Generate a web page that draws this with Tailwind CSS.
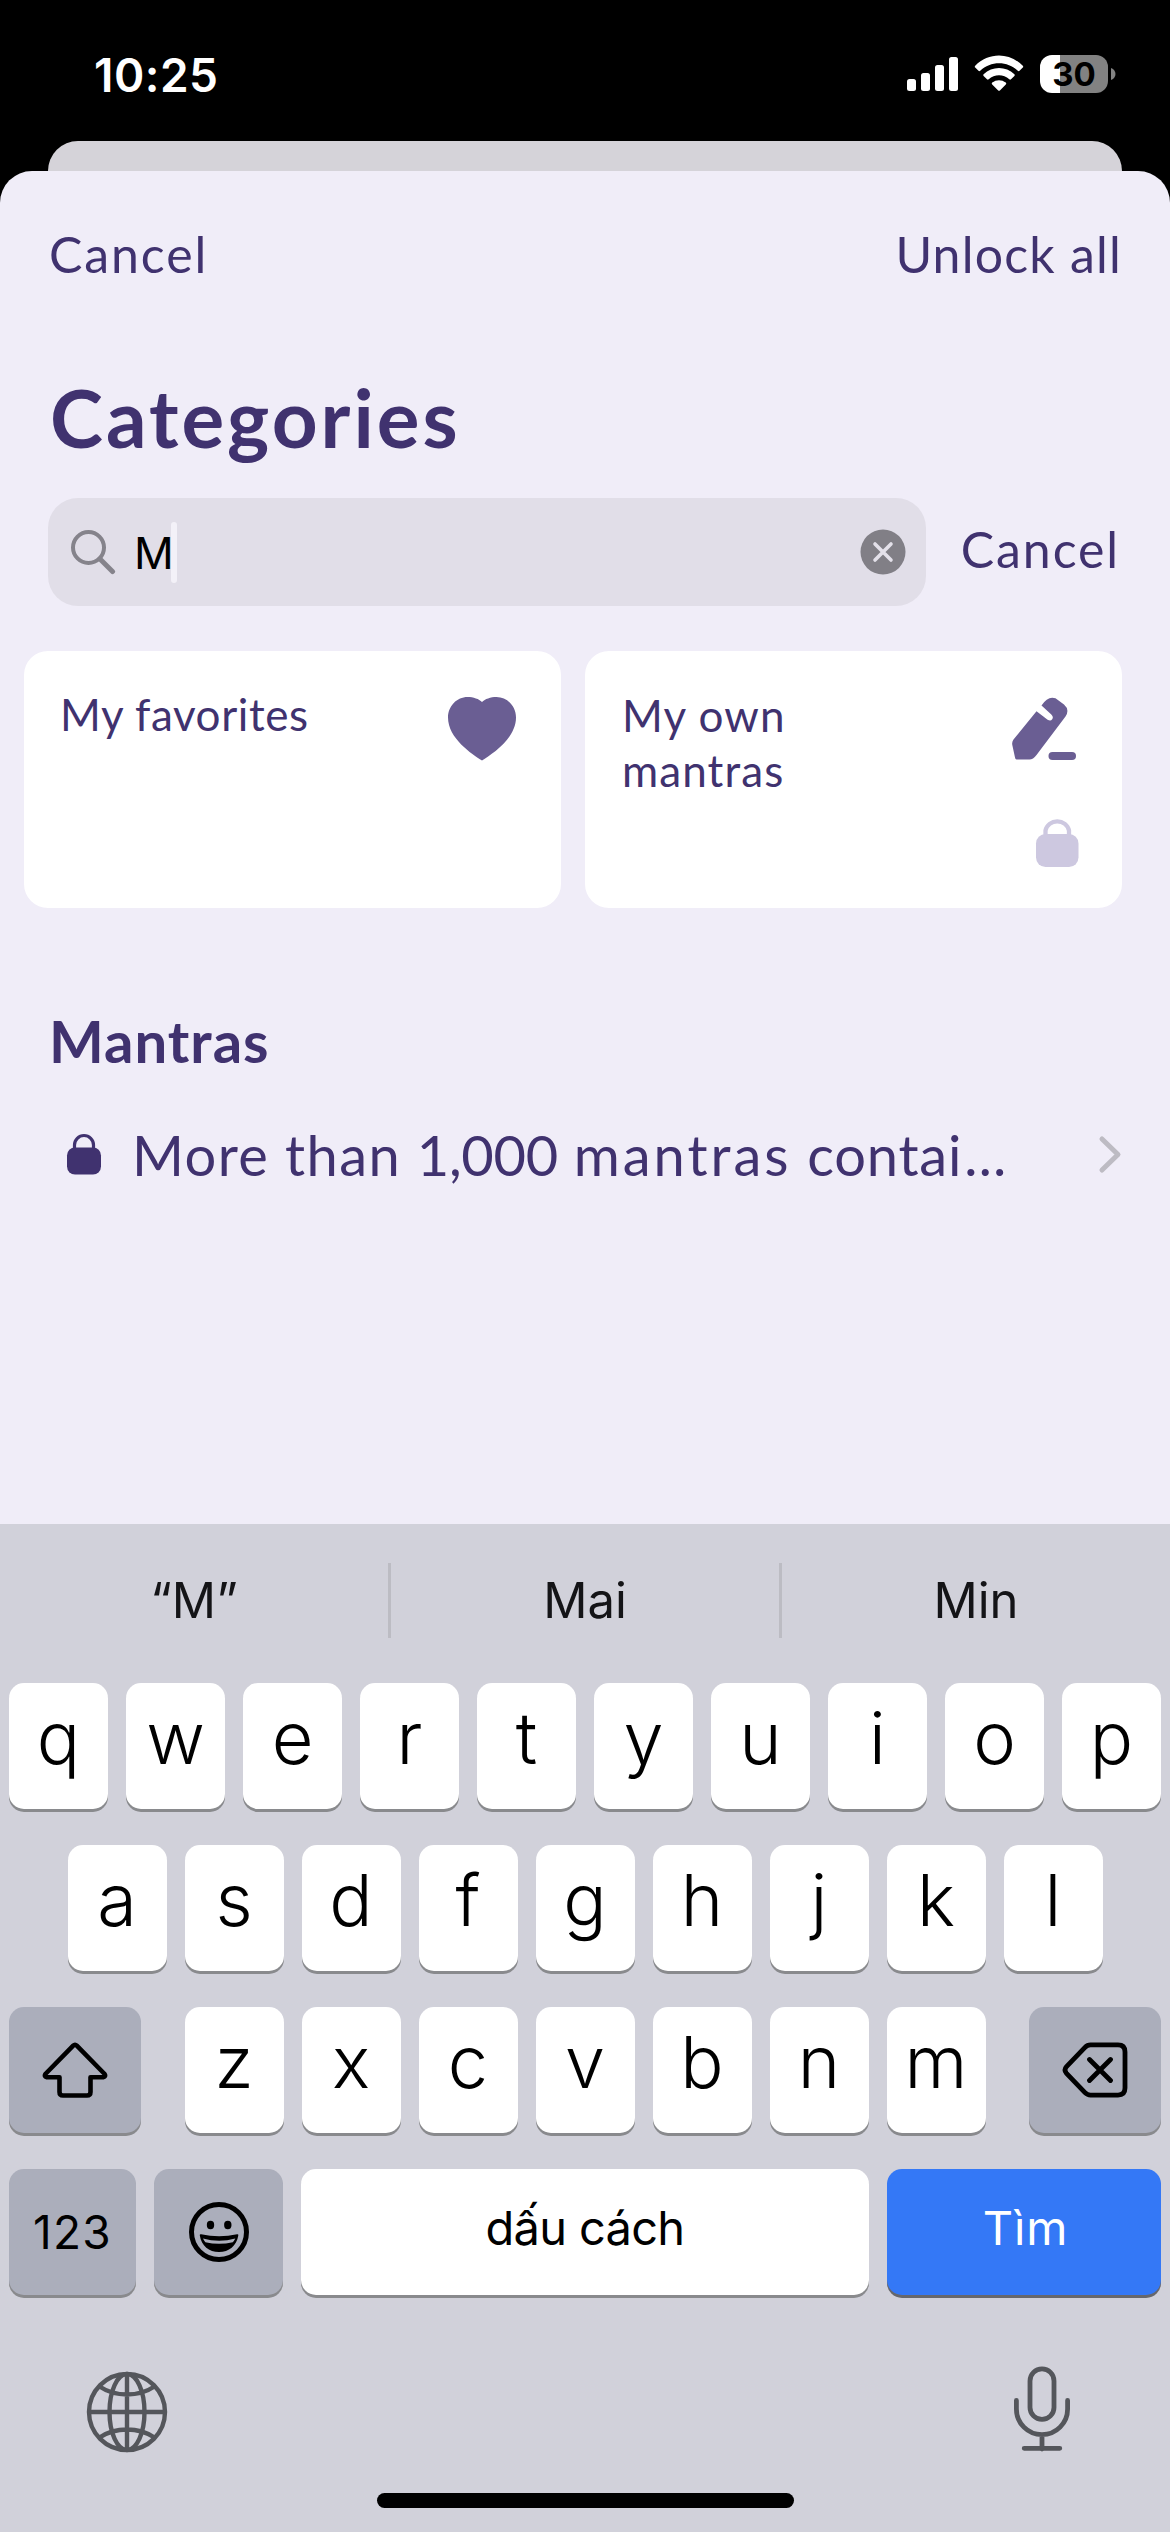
<!DOCTYPE html>
<html lang="vi">
<head>
<meta charset="utf-8">
<title>Categories</title>
<script src="https://cdn.jsdelivr.net/npm/@tailwindcss/browser@4"></script>
</head>
<body class="bg-black">
<div class="flex h-[2532px] w-[1170px] flex-col overflow-hidden bg-black font-['Lato',sans-serif] text-[#40326f]">

  <!-- Status bar -->
  <header class="flex h-[141px] shrink-0 items-start justify-between pl-[94px] pr-[54px] font-['Inter',sans-serif] text-white">
    <div class="pt-[47px] text-[46px] leading-[56px] font-semibold tracking-[0.5px]">10:25</div>
    <div class="flex items-center pt-[55px]">
      <svg class="h-[38px] w-[52px]" viewBox="0 0 52 38" fill="currentColor">
        <rect x="0" y="24" width="9" height="12" rx="2.5"/><rect x="14" y="18" width="9" height="18" rx="2.5"/><rect x="28" y="10" width="9" height="26" rx="2.5"/><rect x="42" y="2" width="9" height="34" rx="2.5"/>
      </svg>
      <svg class="ml-[15px] h-[38px] w-[50px]" viewBox="0 0 50 38" fill="currentColor">
        <path d="M1.2 10.8C14.5-2.9 35.5-2.9 48.8 10.800a1.200 1.200 0 0 1 0 1.700l-3.300 3.300a1.200 1.200 0 0 1-1.700 0C33.500 5.600 16.500 5.600 6.200 15.800a1.200 1.200 0 0 1-1.700 0l-3.300-3.300a1.200 1.200 0 0 1 0-1.700z"/>
        <path d="M9.600 19.200C18.200 10.900 31.800 10.900 40.400 19.200a1.200 1.200 0 0 1 0 1.700l-3.400 3.400a1.200 1.200 0 0 1-1.700 0C29.600 18.900 20.400 18.900 14.700 24.300a1.200 1.200 0 0 1-1.700 0l-3.400-3.400a1.200 1.200 0 0 1 0-1.700z"/>
        <path d="M18.200 27.600c3.900-3.300 9.700-3.300 13.600 0a1.200 1.200 0 0 1 0 1.800l-5.900 6a1.200 1.200 0 0 1-1.700 0l-6-6a1.200 1.200 0 0 1 0-1.800z"/>
      </svg>
      <div class="ml-[16px] flex h-[38px] w-[68px] items-center justify-center rounded-[12px] bg-linear-to-r from-white from-[30%] to-[#828282] to-[30%] text-[33px] leading-none font-bold text-black">30</div>
      <svg class="ml-[3px] h-[12px] w-[5px]" viewBox="0 0 5 12" fill="#828282"><path d="M0 0c3 1 4.500 3.500 4.500 6s-1.500 5-4.500 6z"/></svg>
    </div>
  </header>

  <!-- Edge of the sheet underneath -->
  <div class="mx-[48px] h-[30px] shrink-0 rounded-t-[30px] bg-[#d5d3d9]"></div>

  <!-- Sheet -->
  <main class="flex grow flex-col rounded-t-[32px] bg-[#f0edf8]">
    <nav class="flex h-[163px] items-center justify-between pt-[2px] pl-[49px] pr-[48px] text-[50px] leading-[60px]">
      <span class="tracking-[1.9px]">Cancel</span>
      <span class="tracking-[1.2px]">Unlock all</span>
    </nav>
    <h1 class="flex h-[164px] items-center pt-[2px] pl-[50px] text-[80px] leading-[96px] font-bold tracking-[3px]">Categories</h1>

    <div class="flex h-[108px] items-center pl-[48px] pr-[50px]">
      <div class="flex h-[108px] w-[878px] items-center rounded-[30px] bg-[#e1dee8] pl-[22px] pr-[20px]">
        <svg class="h-[46px] w-[46px]" viewBox="0 0 46 46" fill="none" stroke="#85838b" stroke-width="4" stroke-linecap="round"><circle cx="18.500" cy="18.500" r="15.500"/><path d="M30 30l12.500 12.500" stroke-width="5"/></svg>
        <span class="ml-[18px] pt-[2px] font-['Inter',sans-serif] text-[44px] leading-[54px] text-black">M</span>
        <span class="ml-[-3px] h-[61px] w-[6px] rounded-full bg-[#f3f1f8]"></span>
        <svg class="ml-auto h-[46px] w-[46px]" viewBox="0 0 46 46"><circle cx="23" cy="23" r="22.500" fill="#817f86"/><path d="M15 15l16 16M31 15l-16 16" stroke="#e4e1ea" stroke-width="3.600" stroke-linecap="round"/></svg>
      </div>
      <span class="ml-auto pb-[7px] text-[50px] leading-[60px] tracking-[1.9px]">Cancel</span>
    </div>

    <section class="mt-[45px] flex gap-[24px] pl-[24px]">
      <div class="flex h-[257px] w-[537px] justify-between rounded-[24px] bg-white pt-[36px] pl-[36px] pr-[42px]">
        <span class="text-[44px] leading-[55px] tracking-[0.6px]">My favorites</span>
        <svg class="mt-[8px] h-[68px] w-[74px]" viewBox="0 0 74 68" fill="#6a5e93"><path d="M37 65.500C27 59 3 43.500 3 22.500 3 11 12 2 22.500 2 28.500 2 34 4 37 7c3-3 8.500-5 14.500-5C62 2 71 11 71 22.500 71 43.500 47 59 37 65.500z"/></svg>
      </div>
      <div class="flex h-[257px] w-[537px] justify-between rounded-[24px] bg-white pt-[37px] pl-[37px] pr-[44px]">
        <span class="w-[220px] text-[44px] leading-[55px] tracking-[1.1px]">My own mantras</span>
        <div class="flex flex-col items-end pt-[6px]">
          <svg class="h-[68px] w-[68px]" viewBox="0 0 68 68" fill="#6a5e93">
            <path d="M26.500 17.300L37.600 25.700q3 1.800 4.600-.4 1.600-2.600-.9-4.900L31.500 11.500q6.500-10 14-7.200l8.500 6.300q6 5.200 1.500 11.900L26.500 61q-3.500 4.500-7 4.500H6.500q-1.200-.2-1.500-2L2.300 51q-.6-3 1.200-5.500z"/>
            <rect x="38.500" y="58" width="27.500" height="8" rx="4"/>
          </svg>
          <svg class="mr-[-1px] mt-[54px] h-[52px] w-[44px]" viewBox="0 0 44 52" fill="#cdc8e0"><rect x="1" y="18" width="42.500" height="33" rx="9.500"/><path d="M10.500 20v-5.500a12 11.500 0 0 1 23.500 0V20" fill="none" stroke="#cdc8e0" stroke-width="4.300"/></svg>
        </div>
      </div>
    </section>

    <h2 class="mt-[101px] flex h-[64px] items-center pl-[49px] text-[58px] leading-[64px] font-bold tracking-[1px]">Mantras</h2>

    <div class="mt-[31px] flex h-[100px] items-center pl-[66px] pr-[47px]">
      <svg class="h-[42px] w-[36px]" viewBox="0 0 36 42" fill="#40326f"><rect x="1" y="14.500" width="34" height="27" rx="8"/><path d="M8.500 16v-4a9.500 9.500 0 0 1 19 0v4" fill="none" stroke="#40326f" stroke-width="3.200"/></svg>
      <span class="ml-[30px] pt-[1px] text-[56px] leading-[68px] tracking-[1.4px] whitespace-nowrap">More than <span class="tracking-[-0.3px]">1,000</span> <span class="tracking-[3px]">mantras</span> <span class="tracking-[0.8px]">contai</span><span class="ml-[2px] tracking-[3px]">…</span></span>
      <svg class="ml-auto h-[40px] w-[26px]" viewBox="0 0 26 40" fill="none" stroke="#bdbbc3" stroke-width="5" stroke-linecap="round" stroke-linejoin="round"><path d="M5 5l16 15.500L5 36"/></svg>
    </div>
  </main>

  <!-- Keyboard -->
  <footer class="flex h-[1008px] shrink-0 flex-col bg-[#d1d1da] font-['Inter',sans-serif] text-black">
    <div class="mb-[7px] flex h-[152px] items-center text-[49px] leading-[60px] text-[#141417]">
      <span class="flex-1 pt-[2px] text-center">“M”</span>
      <span class="h-[75px] w-[3px] bg-[#bcbcc3]"></span>
      <span class="flex-1 pt-[2px] text-center">Mai</span>
      <span class="h-[75px] w-[3px] bg-[#bcbcc3]"></span>
      <span class="flex-1 pt-[2px] text-center">Min</span>
    </div>

    <div id="row1" class="flex h-[126px] justify-center gap-[18px]"></div>
    <div id="row2" class="mt-[36px] flex h-[126px] justify-center gap-[18px]"></div>

    <div class="mt-[36px] flex h-[126px] justify-between px-[9px]">
      <div class="flex w-[132px] items-center justify-center rounded-[15px] bg-[#abaebb] shadow-[0_3px_0_#898a8d]">
        <svg class="h-[56px] w-[66px]" viewBox="0 0 66 56" fill="none" stroke="black" stroke-width="4.600" stroke-linejoin="round"><path d="M31.200 3.700q1.800-1.800 3.600 0L62.600 32q1.600 2.600-1.400 3.300H48.500V50q0 3.500-3.500 3.500H21q-3.500 0-3.500-3.500V35.300H4.800q-3-.7-1.400-3.300z"/></svg>
      </div>
      <div id="row3" class="flex gap-[18px]"></div>
      <div class="flex w-[132px] items-center justify-center rounded-[15px] bg-[#abaebb] shadow-[0_3px_0_#898a8d]">
        <svg class="h-[56px] w-[66px]" viewBox="0 0 66 56" fill="none" stroke="black" stroke-width="4.800" stroke-linecap="round" stroke-linejoin="round"><path d="M28.500 2.900H56q7 0 7 7v36.200q0 7-7 7H28.500q-3.200 0-5.500-2.400L4.500 31.300Q1.500 28 4.500 24.700L23 5.300q2.300-2.400 5.500-2.400zM27.500 17.500l21 21M48.500 17.500l-21 21"/></svg>
      </div>
    </div>

    <div class="mt-[36px] flex h-[126px] gap-[18px] px-[9px] text-[47px] leading-[60px]">
      <div class="flex w-[127px] items-center justify-center rounded-[15px] bg-[#abaebb] text-[46px] tracking-[1.2px] shadow-[0_3px_0_#898a8d]">123</div>
      <div class="flex w-[129px] items-center justify-center rounded-[15px] bg-[#abaebb] shadow-[0_3px_0_#898a8d]">
        <svg class="h-[60px] w-[60px]" viewBox="0 0 60 60"><circle cx="30" cy="30" r="27.500" fill="none" stroke="black" stroke-width="5"/><ellipse cx="21.500" cy="23" rx="3.700" ry="4.200"/><ellipse cx="38.800" cy="23" rx="3.700" ry="4.200"/><path d="M10.800 33.500q-.3-1.500 1.300-1.300 18 4.200 36 0 1.500-.2 1.200 1.300C47.500 44 40 50 30 50S12.500 44 10.800 33.500z"/><path d="M14 36.500q16 4.500 32.300 0-1.300 2.500-2.500 3.700-13.800 3.200-27.400 0Q15 38.500 14 36.500z" fill="#abaebb"/></svg>
      </div>
      <div class="flex w-[568px] items-center justify-center rounded-[15px] bg-white pb-[8px] tracking-[-0.7px] shadow-[0_3px_0_#898a8d]">dấu cách</div>
      <div class="flex w-[274px] items-center justify-center rounded-[15px] bg-[#3478f6] pb-[8px] pl-[3px] tracking-[0.8px] text-white shadow-[0_3px_0_#66676c]">Tìm</div>
    </div>

    <div class="mt-[66px] flex items-start justify-between pl-[86px] pr-[98px]">
      <svg class="mt-[10px] h-[82px] w-[82px]" viewBox="0 0 82 82" fill="none" stroke="#54565b" stroke-width="4.400"><circle cx="41" cy="41" r="38"/><ellipse cx="41" cy="41" rx="17.500" ry="38"/><path d="M41 3v76M3 41h76M13.500 15.500q12 8 27.500 8t27.500-8M13.500 66.500q12-8 27.500-8t27.500 8"/></svg>
      <svg class="mt-[5px] h-[86px] w-[60px]" viewBox="0 0 60 86" fill="none" stroke="#54565b" stroke-width="4.800" stroke-linecap="round"><rect x="18" y="2.900" width="24" height="50.500" rx="12"/><path d="M4.400 34.500v8.500a25.600 25.600 0 0 0 51.200 0v-8.500M30 69v14M12.200 82.300h35.600"/></svg>
    </div>

    <div class="mx-auto mt-auto mb-[24px] h-[15px] w-[417px] rounded-full bg-black"></div>
  </footer>
</div>

<script>
  // Letter keys, one string per keyboard row
  const rows = { row1: 'qwertyuiop', row2: 'asdfghjkl', row3: 'zxcvbnm' };
  for (const [id, letters] of Object.entries(rows)) {
    document.getElementById(id).innerHTML = [...letters].map(l =>
      `<div class="h-[126px] w-[99px] rounded-[15px] bg-white text-center text-[72px] leading-[110px] font-[350] shadow-[0_3px_0_#898a8d]">${l}</div>`
    ).join('');
  }
</script>
</body>
</html>
